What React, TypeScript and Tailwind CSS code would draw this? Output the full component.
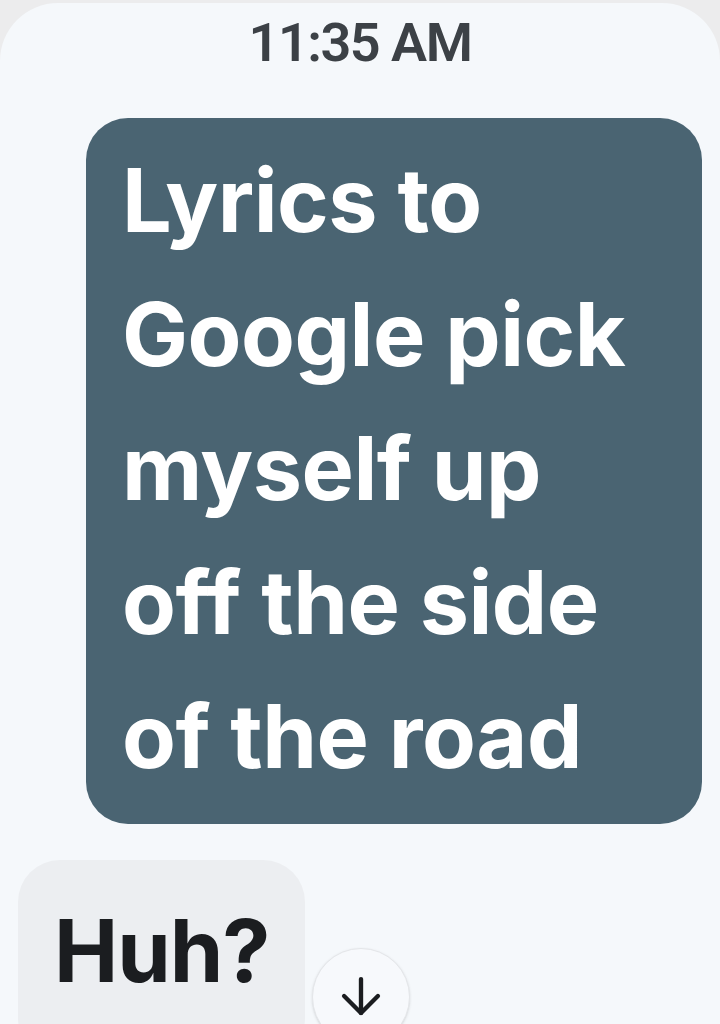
import React from "react";
import { ArrowDown } from "lucide-react";

export default function App() {
  return (
    <div className="w-[720px] h-[1024px] overflow-hidden bg-[#ececed] relative" style={{ fontFamily: "Inter, Roboto, 'Noto Sans', sans-serif" }}>
      <div className="mt-[3px] h-[1100px] rounded-t-[58px] bg-[#f5f8fb] flex flex-col">
        <div className="pt-[13px] text-center text-[54px] leading-none font-semibold text-[#3c4146] tracking-[-1.5px]" style={{ fontFamily: "Roboto, sans-serif" }}>
          11:35 AM
        </div>
        <div className="self-end mr-[18px] mt-[48px] w-[616px] rounded-[42px] bg-[#4a6472] pl-[36px] pr-[6px] pt-[15px] pb-[21px] text-white text-[88px] leading-[134px] font-bold tracking-[-0.5px]">
          Lyrics to<br />
          Google pick<br />
          myself up<br />
          off the side<br />
          of the road
        </div>
        <div className="self-start ml-[18px] mt-[36px] w-[287px] h-[200px] rounded-[42px] bg-[#eceef1] pl-[36px] pt-[24px] text-[#1b1d20] text-[86px] leading-[134px] font-bold tracking-[-1px]">
          Huh?
        </div>
      </div>
      <div className="absolute left-[312px] top-[948px] w-[98px] h-[98px] rounded-full bg-[#f7f9fc] border border-[#e4e6e9] shadow-sm flex justify-center pt-[18px]">
        <ArrowDown size={58} strokeWidth={1.8} color="#1b1d20" />
      </div>
    </div>
  );
}
